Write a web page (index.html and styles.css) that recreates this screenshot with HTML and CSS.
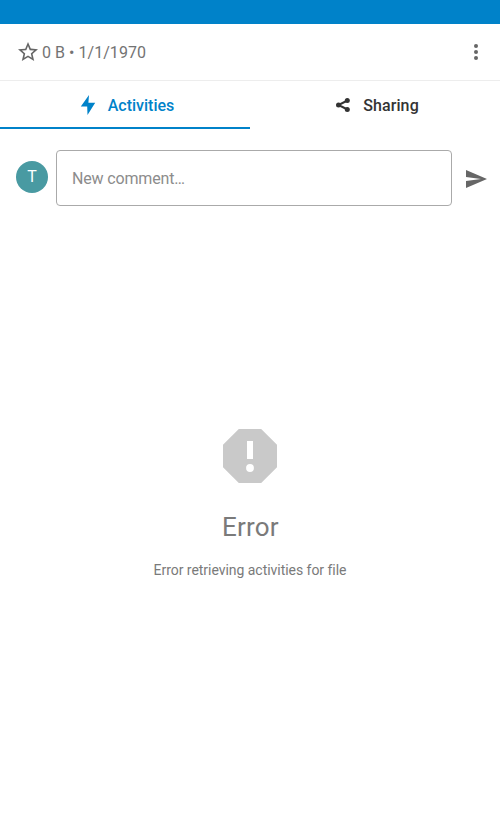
FILE: index.html
```html
<!DOCTYPE html>
<html lang="en">
<head>
<meta charset="utf-8">
<title>File details</title>
<link rel="stylesheet" href="styles.css">
</head>
<body>
<div class="status-bar"></div>
<header class="file-header">
  <svg class="star" viewBox="0 0 24 24"><path d="M22 9.24l-7.19-.62L12 2 9.19 8.63 2 9.24l5.46 4.73L5.82 21 12 17.27 18.18 21l-1.63-7.03L22 9.24zM12 15.4l-3.76 2.27 1-4.28-3.32-2.88 4.38-.38L12 6.1l1.71 4.04 4.38.38-3.32 2.88 1 4.28L12 15.4z"/></svg>
  <span class="file-meta">0 B • 1/1/1970</span>
  <svg class="more" viewBox="0 0 24 24"><circle cx="12" cy="6" r="2"/><circle cx="12" cy="12" r="2"/><circle cx="12" cy="18" r="2"/></svg>
</header>
<nav class="tabs">
  <div class="tab tab-active">
    <svg class="bolt" viewBox="0 0 16 20"><path d="M9 0 .8 11.5h6.4L7.5 20 15.2 7.8H8.4z"/></svg>
    <span>Activities</span>
  </div>
  <div class="tab">
    <svg class="share" viewBox="0 0 16 16"><path d="M12.5 3.5 3.5 8l9 4.5" fill="none" stroke="currentColor" stroke-width="2"/><circle cx="3.5" cy="8" r="2.5"/><circle cx="12.3" cy="3.5" r="2.5"/><circle cx="12.3" cy="12.5" r="2.5"/></svg>
    <span class="sharing-label">Sharing</span>
  </div>
</nav>
<section class="comment-row">
  <div class="avatar">T</div>
  <div class="comment-box">New comment…</div>
  <svg class="send" viewBox="0 0 24 24"><path d="M2 21l21-9L2 3v7l15 2-15 2z"/></svg>
</section>
<main class="empty">
  <svg class="error-icon" viewBox="0 0 24 24"><path fill-rule="evenodd" d="M15.73 3H8.27L3 8.27v7.46L8.27 21h7.46L21 15.73V8.27zM11 7h2v6h-2zM12 14.7a1.3 1.3 0 1 1 0 2.6 1.3 1.3 0 0 1 0-2.6z"/></svg>
  <h1 class="error-title">Error</h1>
  <p class="error-text">Error retrieving activities for file</p>
</main>
</body>
</html>
```
FILE: styles.css
```css
* { box-sizing: border-box; }
body {
  margin: 0;
  height: 833px;
  background: #fff;
  color: #666;
  font-family: Roboto, sans-serif;
  font-size: 16px;
  overflow: hidden;
}
svg { display: block; flex: none; fill: currentColor; }
.status-bar { height: 24px; background: #0082c9; }
.file-header {
  display: flex;
  align-items: center;
  height: 57px;
  padding: 0 12px 0 16px;
  border-bottom: 1px solid #ededed;
}
.star { width: 24px; height: 24px; }
.file-meta { margin-left: 2px; color: #737373; letter-spacing: 0.04px; }
.more { width: 24px; height: 24px; margin-left: auto; }
.tabs { display: flex; height: 48px; }
.tab {
  flex: 1;
  display: flex;
  align-items: center;
  justify-content: center;
  gap: 12px;
  padding: 2px 0 0 4px;
  color: #333;
  font-weight: 500;
  border-bottom: 2px solid transparent;
}
.tab-active { color: #0082c9; border-bottom-color: #0082c9; }
.sharing-label { letter-spacing: 0.1px; }
.bolt { width: 16px; height: 20px; }
.share { width: 16px; height: 16px; }
.comment-row {
  display: flex;
  height: 56px;
  margin: 21px 12px 0 16px;
}
.avatar {
  width: 32px;
  height: 32px;
  margin: 11px 8px 0 0;
  border-radius: 50%;
  background: #499aa2;
  color: #fff;
  line-height: 32px;
  text-align: center;
}
.comment-box {
  width: 396px;
  padding: 1px 0 0 15px;
  border: 1px solid #aaa;
  border-radius: 4px;
  color: #8c8c8c;
  letter-spacing: -0.15px;
  line-height: 54px;
}
.send { width: 24px; height: 24px; margin: 17px 0 0 12px; }
.empty {
  display: flex;
  flex-direction: column;
  align-items: center;
  padding-top: 214px;
}
.error-icon { width: 72px; height: 72px; color: #c9c9c9; }
.error-title {
  margin: 20px 0 0 1px;
  color: #7a7a7a;
  font-size: 26px;
  font-weight: 400;
  letter-spacing: 0.2px;
  line-height: 30px;
}
.error-text {
  margin: 20px 0 0;
  color: #7a7a7a;
  font-size: 14px;
  letter-spacing: -0.04px;
  line-height: 16px;
}
```
